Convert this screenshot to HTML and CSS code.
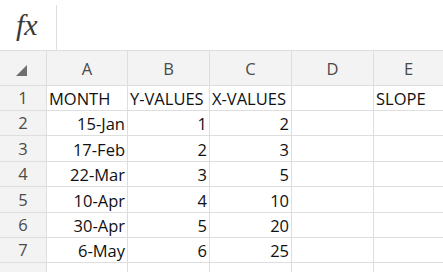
FILE: index.html
```html
<!DOCTYPE html>
<html lang="en">
<head>
    <meta charset="UTF-8">
    <title>Slope sheet</title>
    <link rel="stylesheet" href="styles.css">
</head>
<body>
    <div class="formula-bar">
        <div class="fx">fx</div>
        <div class="formula-input"></div>
    </div>

    <div class="sheet">
        <div class="corner"><span class="corner-mark"></span></div>
        <div class="col-head">A</div>
        <div class="col-head">B</div>
        <div class="col-head">C</div>
        <div class="col-head">D</div>
        <div class="col-head">E</div>

        <div class="row-head">1</div>
        <div class="cell">MONTH</div>
        <div class="cell">Y-VALUES</div>
        <div class="cell">X-VALUES</div>
        <div class="cell"></div>
        <div class="cell">SLOPE</div>

        <div class="row-head">2</div>
        <div class="cell num">15-Jan</div>
        <div class="cell num">1</div>
        <div class="cell num">2</div>
        <div class="cell"></div>
        <div class="cell"></div>

        <div class="row-head">3</div>
        <div class="cell num">17-Feb</div>
        <div class="cell num">2</div>
        <div class="cell num">3</div>
        <div class="cell"></div>
        <div class="cell"></div>

        <div class="row-head">4</div>
        <div class="cell num">22-Mar</div>
        <div class="cell num">3</div>
        <div class="cell num">5</div>
        <div class="cell"></div>
        <div class="cell"></div>

        <div class="row-head">5</div>
        <div class="cell num">10-Apr</div>
        <div class="cell num">4</div>
        <div class="cell num">10</div>
        <div class="cell"></div>
        <div class="cell"></div>

        <div class="row-head">6</div>
        <div class="cell num">30-Apr</div>
        <div class="cell num">5</div>
        <div class="cell num">20</div>
        <div class="cell"></div>
        <div class="cell"></div>

        <div class="row-head">7</div>
        <div class="cell num">6-May</div>
        <div class="cell num">6</div>
        <div class="cell num">25</div>
        <div class="cell"></div>
        <div class="cell"></div>

        <div class="row-head"></div>
        <div class="cell"></div>
        <div class="cell"></div>
        <div class="cell"></div>
        <div class="cell"></div>
        <div class="cell"></div>
    </div>
</body>
</html>
```

FILE: styles.css
```css
:root {
    --grid-line: #dedede;
    --head-bg: #f3f3f3;
    --head-text: #4a4a4a;
}

body {
    margin: 0;
    background: #fff;
    font-family: 'Open Sans', 'Liberation Sans', sans-serif;
    overflow: hidden;
}

.formula-bar {
    display: flex;
    height: 50px;
}

.fx {
    width: 56px;
    box-sizing: border-box;
    padding: 10px 0 0 16px;
    font-family: 'Liberation Serif', serif;
    font-style: italic;
    font-size: 30px;
    line-height: 30px;
    color: #3a3a3a;
}

.formula-input {
    flex: 1;
    margin-top: 5px;
    border-left: 1px solid var(--grid-line);
}

.sheet {
    display: grid;
    grid-template-columns: 46px 80px 81px 81px 81px 1fr;
    grid-template-rows: 34px 24px 24px 25px 24px 25px 24px 24px 20px;
    gap: 1px;
    padding-top: 1px;
    background: var(--grid-line);
    font-size: 16.5px;
}

.corner {
    background: var(--head-bg);
    position: relative;
}

.corner-mark {
    position: absolute;
    left: 16px;
    top: 14px;
    width: 0;
    height: 0;
    border-left: 11px solid transparent;
    border-bottom: 11px solid #6f6f6f;
}

.col-head {
    background: var(--head-bg);
    color: var(--head-text);
    display: flex;
    align-items: center;
    justify-content: center;
}

.row-head {
    background: var(--head-bg);
    color: var(--head-text);
    display: flex;
    align-items: flex-end;
    justify-content: center;
    padding-bottom: 1px;
}

.cell {
    background: #fff;
    color: #111;
    display: flex;
    align-items: flex-end;
    padding: 0 2px 0 2px;
    white-space: nowrap;
    line-height: 22px;
}

.num {
    justify-content: flex-end;
}
```
